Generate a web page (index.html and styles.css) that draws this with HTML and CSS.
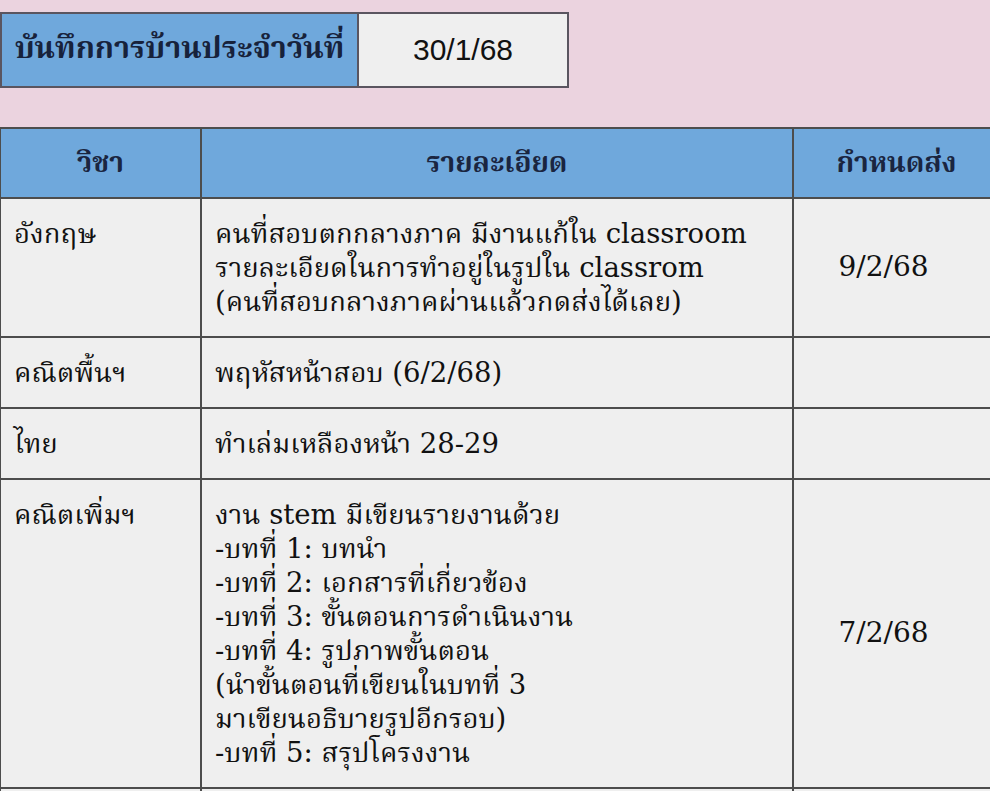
FILE: index.html
```html
<!DOCTYPE html>
<html lang="th">
<head>
<meta charset="utf-8">
<title>บันทึกการบ้าน</title>
<link rel="stylesheet" href="styles.css">
</head>
<body>
<div class="page">
  <div class="title-box">
    <div class="title-label">บันทึกการบ้านประจำวันที่</div>
    <div class="title-date">30/1/68</div>
  </div>
  <table class="hw">
    <colgroup>
      <col class="c-subj">
      <col class="c-detail">
      <col class="c-due">
    </colgroup>
    <thead>
      <tr>
        <th>วิชา</th>
        <th>รายละเอียด</th>
        <th>กำหนดส่ง</th>
      </tr>
    </thead>
    <tbody>
      <tr>
        <td>อังกฤษ</td>
        <td>คนที่สอบตกกลางภาค มีงานแก้ใน classroom<br>รายละเอียดในการทำอยู่ในรูปใน classrom<br>(คนที่สอบกลางภาคผ่านแล้วกดส่งได้เลย)</td>
        <td class="due">9/2/68</td>
      </tr>
      <tr>
        <td>คณิตพื้นฯ</td>
        <td>พฤหัสหน้าสอบ (6/2/68)</td>
        <td class="due"></td>
      </tr>
      <tr>
        <td>ไทย</td>
        <td>ทำเล่มเหลืองหน้า 28-29</td>
        <td class="due"></td>
      </tr>
      <tr>
        <td>คณิตเพิ่มฯ</td>
        <td>งาน stem มีเขียนรายงานด้วย<br>-บทที่ 1: บทนำ<br>-บทที่ 2: เอกสารที่เกี่ยวข้อง<br>-บทที่ 3: ขั้นตอนการดำเนินงาน<br>-บทที่ 4: รูปภาพขั้นตอน<br>(นำขั้นตอนที่เขียนในบทที่ 3<br>มาเขียนอธิบายรูปอีกรอบ)<br>-บทที่ 5: สรุปโครงงาน</td>
        <td class="due">7/2/68</td>
      </tr>
      <tr>
        <td>&nbsp;</td>
        <td>&nbsp;</td>
        <td class="due">&nbsp;</td>
      </tr>
    </tbody>
  </table>
</div>
</body>
</html>
```
FILE: styles.css
```css
html, body {
  margin: 0;
  padding: 0;
  background: #ebd3df;
  overflow: hidden;
}
.page {
  width: 1000px;
  padding-top: 12px;
  font-family: "DejaVu Serif", "Noto Serif Thai", "Noto Sans Thai Looped", "Noto Sans Thai", serif;
  color: #111;
}
.title-box {
  display: flex;
  width: 569px;
  height: 76px;
  box-sizing: border-box;
  border: 2px solid #5a5560;
  margin-bottom: 39px;
}
.title-label {
  width: 355px;
  background: #6fa8dc;
  border-right: 2px solid #5a5560;
  display: flex;
  align-items: center;
  justify-content: center;
  font-weight: bold;
  font-size: 30.5px;
  color: #17223b;
}
.title-date {
  flex: 1;
  background: #efefef;
  display: flex;
  align-items: center;
  justify-content: center;
  font-family: "Liberation Sans Narrow", "Liberation Sans", sans-serif;
  font-size: 30px;
  color: #111;
}
.hw {
  border-collapse: collapse;
  width: 1000px;
  table-layout: fixed;
  margin-left: -1px;
}
.c-subj { width: 201px; }
.c-detail { width: 592px; }
.c-due { width: 207px; }
.hw th, .hw td {
  border: 2px solid #4d4d4d;
}
.hw th {
  background: #6fa8dc;
  height: 66px;
  font-size: 28px;
  line-height: 34px;
  font-weight: bold;
  color: #1a2540;
  text-align: center;
}
.hw td {
  background: #efefef;
  font-size: 27.5px;
  line-height: 34px;
  padding: 17px 10px 18px 13px;
  vertical-align: top;
  text-align: left;
}
.hw td.due {
  font-size: 28px;
  text-align: center;
  vertical-align: middle;
  padding-left: 0;
  padding-right: 26px;
}
```
